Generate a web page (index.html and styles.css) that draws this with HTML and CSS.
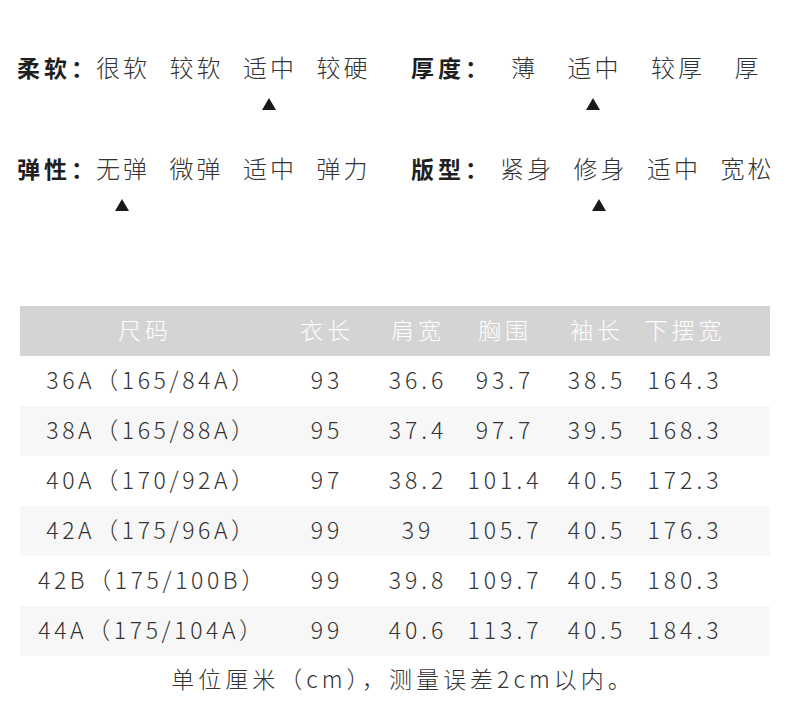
FILE: index.html
```html
<!DOCTYPE html>
<html lang="zh-CN">
<head>
<meta charset="utf-8">
<title>尺码表</title>
<link rel="stylesheet" href="styles.css">
</head>
<body>
<div class="page">
  <div class="attrs">
    <div class="attr">
      <div class="label">柔软：</div>
      <div class="opts">
        <div class="opt"><span class="t">很软</span></div>
        <div class="opt"><span class="t">较软</span></div>
        <div class="opt"><span class="t">适中</span><i class="tri"></i></div>
        <div class="opt"><span class="t">较硬</span></div>
      </div>
    </div>
    <div class="attr right">
      <div class="label">厚度：</div>
      <div class="opts wide">
        <div class="opt"><span class="t">薄</span></div>
        <div class="opt"><span class="t">适中</span><i class="tri"></i></div>
        <div class="opt"><span class="t">较厚</span></div>
        <div class="opt"><span class="t">厚</span></div>
      </div>
    </div>
    <div class="attr">
      <div class="label">弹性：</div>
      <div class="opts">
        <div class="opt"><span class="t">无弹</span><i class="tri"></i></div>
        <div class="opt"><span class="t">微弹</span></div>
        <div class="opt"><span class="t">适中</span></div>
        <div class="opt"><span class="t">弹力</span></div>
      </div>
    </div>
    <div class="attr right">
      <div class="label">版型：</div>
      <div class="opts">
        <div class="opt"><span class="t">紧身</span></div>
        <div class="opt"><span class="t">修身</span><i class="tri"></i></div>
        <div class="opt"><span class="t">适中</span></div>
        <div class="opt"><span class="t">宽松</span></div>
      </div>
    </div>
  </div>

  <div class="table">
    <div class="tr head">
      <div>尺码</div><div>衣长</div><div>肩宽</div><div>胸围</div><div>袖长</div><div>下摆宽</div><div></div>
    </div>
    <div class="tr">
      <div class="size">36A（165/84A）</div><div>93</div><div>36.6</div><div>93.7</div><div>38.5</div><div>164.3</div><div></div>
    </div>
    <div class="tr alt">
      <div class="size">38A（165/88A）</div><div>95</div><div>37.4</div><div>97.7</div><div>39.5</div><div>168.3</div><div></div>
    </div>
    <div class="tr">
      <div class="size">40A（170/92A）</div><div>97</div><div>38.2</div><div>101.4</div><div>40.5</div><div>172.3</div><div></div>
    </div>
    <div class="tr alt">
      <div class="size">42A（175/96A）</div><div>99</div><div>39</div><div>105.7</div><div>40.5</div><div>176.3</div><div></div>
    </div>
    <div class="tr">
      <div class="size">42B（175/100B）</div><div>99</div><div>39.8</div><div>109.7</div><div>40.5</div><div>180.3</div><div></div>
    </div>
    <div class="tr alt">
      <div class="size">44A（175/104A）</div><div>99</div><div>40.6</div><div>113.7</div><div>40.5</div><div>184.3</div><div></div>
    </div>
  </div>
  <p class="note">单位厘米（cm），测量误差2cm以内。</p>
</div>
</body>
</html>
```

FILE: styles.css
```css
html, body {
  margin: 0;
  padding: 0;
  background: #ffffff;
}

body {
  font-family: "Noto Sans CJK SC", "Noto Sans", sans-serif;
  font-weight: 300;
  color: #333333;
  width: 790px;
  height: 726px;
  overflow: hidden;
}

.page {
  padding: 52px 0 0 17px;
}

.attrs {
  display: grid;
  grid-template-columns: 394px 1fr;
  row-gap: 43px;
}

.attr {
  display: flex;
  align-items: flex-start;
}

.label {
  width: 76px;
  flex: none;
  font-size: 23px;
  line-height: 30px;
  font-weight: 700;
  color: #1f1f1f;
  letter-spacing: 4px;
  white-space: nowrap;
}

.attr.right .label {
  width: 86px;
}

.opts {
  display: flex;
  gap: 16.5px;
}

.opts.wide {
  gap: 26.5px;
  margin-left: 11px;
}

.opt {
  display: flex;
  flex-direction: column;
  align-items: center;
}

.t {
  font-size: 24px;
  line-height: 30px;
  letter-spacing: 3px;
  padding-left: 3px;
  color: #333333;
  white-space: nowrap;
}

.tri {
  display: block;
  width: 0;
  height: 0;
  margin-top: 16px;
  border-left: 7px solid transparent;
  border-right: 7px solid transparent;
  border-bottom: 12px solid #1a1a1a;
}

.table {
  margin-top: 95px;
  margin-left: 3px;
  width: 750px;
}

.tr {
  display: grid;
  grid-template-columns: 246px 118px 64px 110px 74px 102px 36px;
  height: 50px;
  align-items: center;
  font-size: 23px;
  letter-spacing: 4px;
  color: #333333;
}

.tr > div {
  text-align: center;
  padding-left: 4px;
  padding-bottom: 4px;
  white-space: nowrap;
}

.tr > .size {
  letter-spacing: 3.6px;
  padding-left: 18px;
}

.tr.head {
  background: #d4d4d4;
  color: #ffffff;
}

.tr.alt {
  background: #f7f7f7;
}

.note {
  margin: 0 0 0 -17px;
  width: 790px;
  height: 44px;
  line-height: 44px;
  text-align: center;
  font-size: 23px;
  letter-spacing: 4px;
  padding-left: 16px;
  box-sizing: border-box;
  color: #333333;
}
```
